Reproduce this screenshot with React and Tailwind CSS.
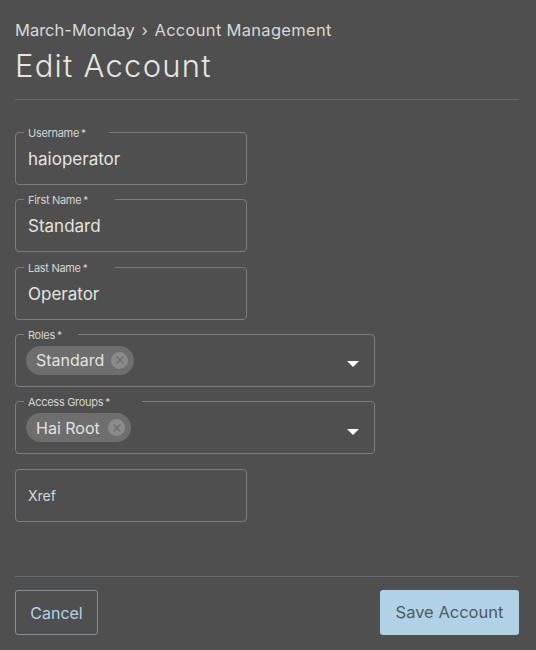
import { X } from 'lucide-react';

function Field({ label, legendWidth, wide, children }) {
  return (
    <fieldset className={`relative m-0 h-[58px] min-w-0 rounded-[4px] border border-[#7c7c7c] px-3 ${wide ? 'w-[360px]' : 'w-[232px]'}`}>
      <legend className={`ml-[-4px] h-[11px] text-[11px] leading-[13px] tracking-[-0.3px] text-[#d4d4d4] ${label ? `pl-1 ${legendWidth}` : 'w-0 p-0'}`}>
        {label}
        {label ? <span className="ml-[2px] align-top text-[10px]">*</span> : null}
      </legend>
      {children}
    </fieldset>
  );
}

function TextField({ label, legendWidth, value }) {
  return (
    <Field label={label} legendWidth={legendWidth}>
      {label ? (
        <div className="pt-[9px] text-[17px] leading-6 text-[#e4e4e2]">{value}</div>
      ) : (
        <div className="pt-[9px] text-[14px] leading-6 text-[#d8d8d8]">{value}</div>
      )}
    </Field>
  );
}

function ChipField({ label, legendWidth, chip, chipWidth }) {
  return (
    <Field label={label} legendWidth={legendWidth} wide>
      <div className="flex items-center justify-between pt-[6px]">
        <div className={`-ml-[2px] flex h-[29px] items-center justify-between rounded-full bg-[#6e6e6e] pl-[10px] pr-[6px] text-[16px] text-[#e2e2e0] ${chipWidth}`}>
          <span>{chip}</span>
          <span className="flex h-[17px] w-[17px] items-center justify-center rounded-full bg-[#8b8b8b]">
            <X size={12} strokeWidth={2.5} className="text-[#6a6a6a]" />
          </span>
        </div>
        <svg width="12" height="6" viewBox="0 0 12 6" className="mr-[3px] mt-[8px]">
          <path d="M0 0 H12 L6 6 Z" fill="#ffffff" />
        </svg>
      </div>
    </Field>
  );
}

export default function App() {
  return (
    <div className="flex h-[650px] w-[536px] flex-col overflow-hidden bg-[#4f4f4f] px-[15px] font-['Inter','Liberation_Sans',sans-serif]">
      <div className="mr-[2px] h-[100px] border-b border-[#696969] pt-[20px]">
        <div className="text-[16.5px] leading-5 text-[#d8d8d6]">
          March-Monday <span className="mx-[2px]">›</span> <span className="tracking-[0.3px]">Account Management</span>
        </div>
        <h1 className="mt-[5px] text-[31px] font-light leading-[42px] tracking-[1.25px] text-[#e6e6e3]">Edit Account</h1>
      </div>

      <form className="mr-[2px] mt-[27px] flex h-[450px] flex-col gap-[9.34px] border-b border-[#696969]">
        <TextField label="Username" legendWidth="w-[85px]" value="haioperator" />
        <TextField label="First Name" legendWidth="w-[91px]" value="Standard" />
        <TextField label="Last Name" legendWidth="w-[91px]" value="Operator" />
        <ChipField label="Roles" legendWidth="w-[54px]" chip="Standard" chipWidth="w-[108px]" />
        <ChipField label="Access Groups" legendWidth="w-[118px]" chip="Hai Root" chipWidth="w-[105px]" />
        <TextField value="Xref" />
      </form>

      <div className="mr-[2px] mt-[13px] flex items-center justify-between">
        <button className="h-[45px] w-[83px] rounded-[3px] border border-[#84919b] text-[16px] text-[#b3d2e8]">Cancel</button>
        <button className="h-[45px] w-[139px] rounded-[3px] bg-[#b1d1e7] text-[16.5px] text-[#4f5a63]">Save Account</button>
      </div>
    </div>
  );
}
